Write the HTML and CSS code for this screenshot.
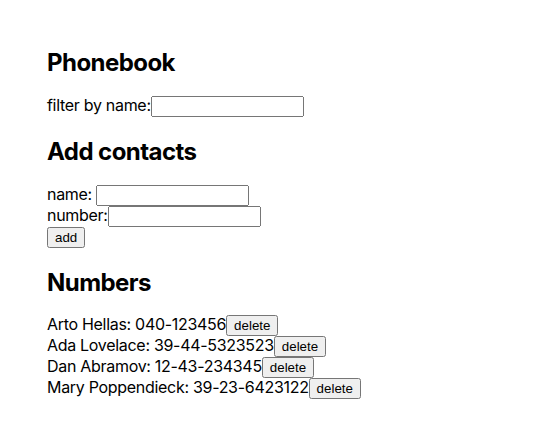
FILE: index.html
```html
<!DOCTYPE html>
<html>
<head>
<meta charset="utf-8">
<link rel="stylesheet" href="styles.css">
</head>
<body>
<div class="app">
  <h2>Phonebook</h2>
  <div>filter by name:<input class="field"></div>
  <h2>Add contacts</h2>
  <form>
    <div>name: <input class="field"></div>
    <div>number:<input class="field"></div>
    <div><button type="submit">add</button></div>
  </form>
  <h2>Numbers</h2>
  <div>Arto Hellas: 040-123456<button>delete</button></div>
  <div>Ada Lovelace: 39-44-5323523<button>delete</button></div>
  <div>Dan Abramov: 12-43-234345<button>delete</button></div>
  <div>Mary Poppendieck: 39-23-6423122<button>delete</button></div>
</div>
</body>
</html>
```
FILE: styles.css
```css
body {
  margin: 0;
  font-family: Inter, "Liberation Sans", sans-serif;
  color: #000;
  letter-spacing: -0.3px;
  line-height: 1.16;
}
.app {
  padding: 28px 47px;
}
h2 {
  letter-spacing: -0.55px;
  margin: 21px 0 19px;
}
form {
  margin: 0;
}
.field {
  box-sizing: border-box;
  width: 153px;
  height: 21px;
  letter-spacing: normal;
}
button {
  letter-spacing: normal;
}
```
